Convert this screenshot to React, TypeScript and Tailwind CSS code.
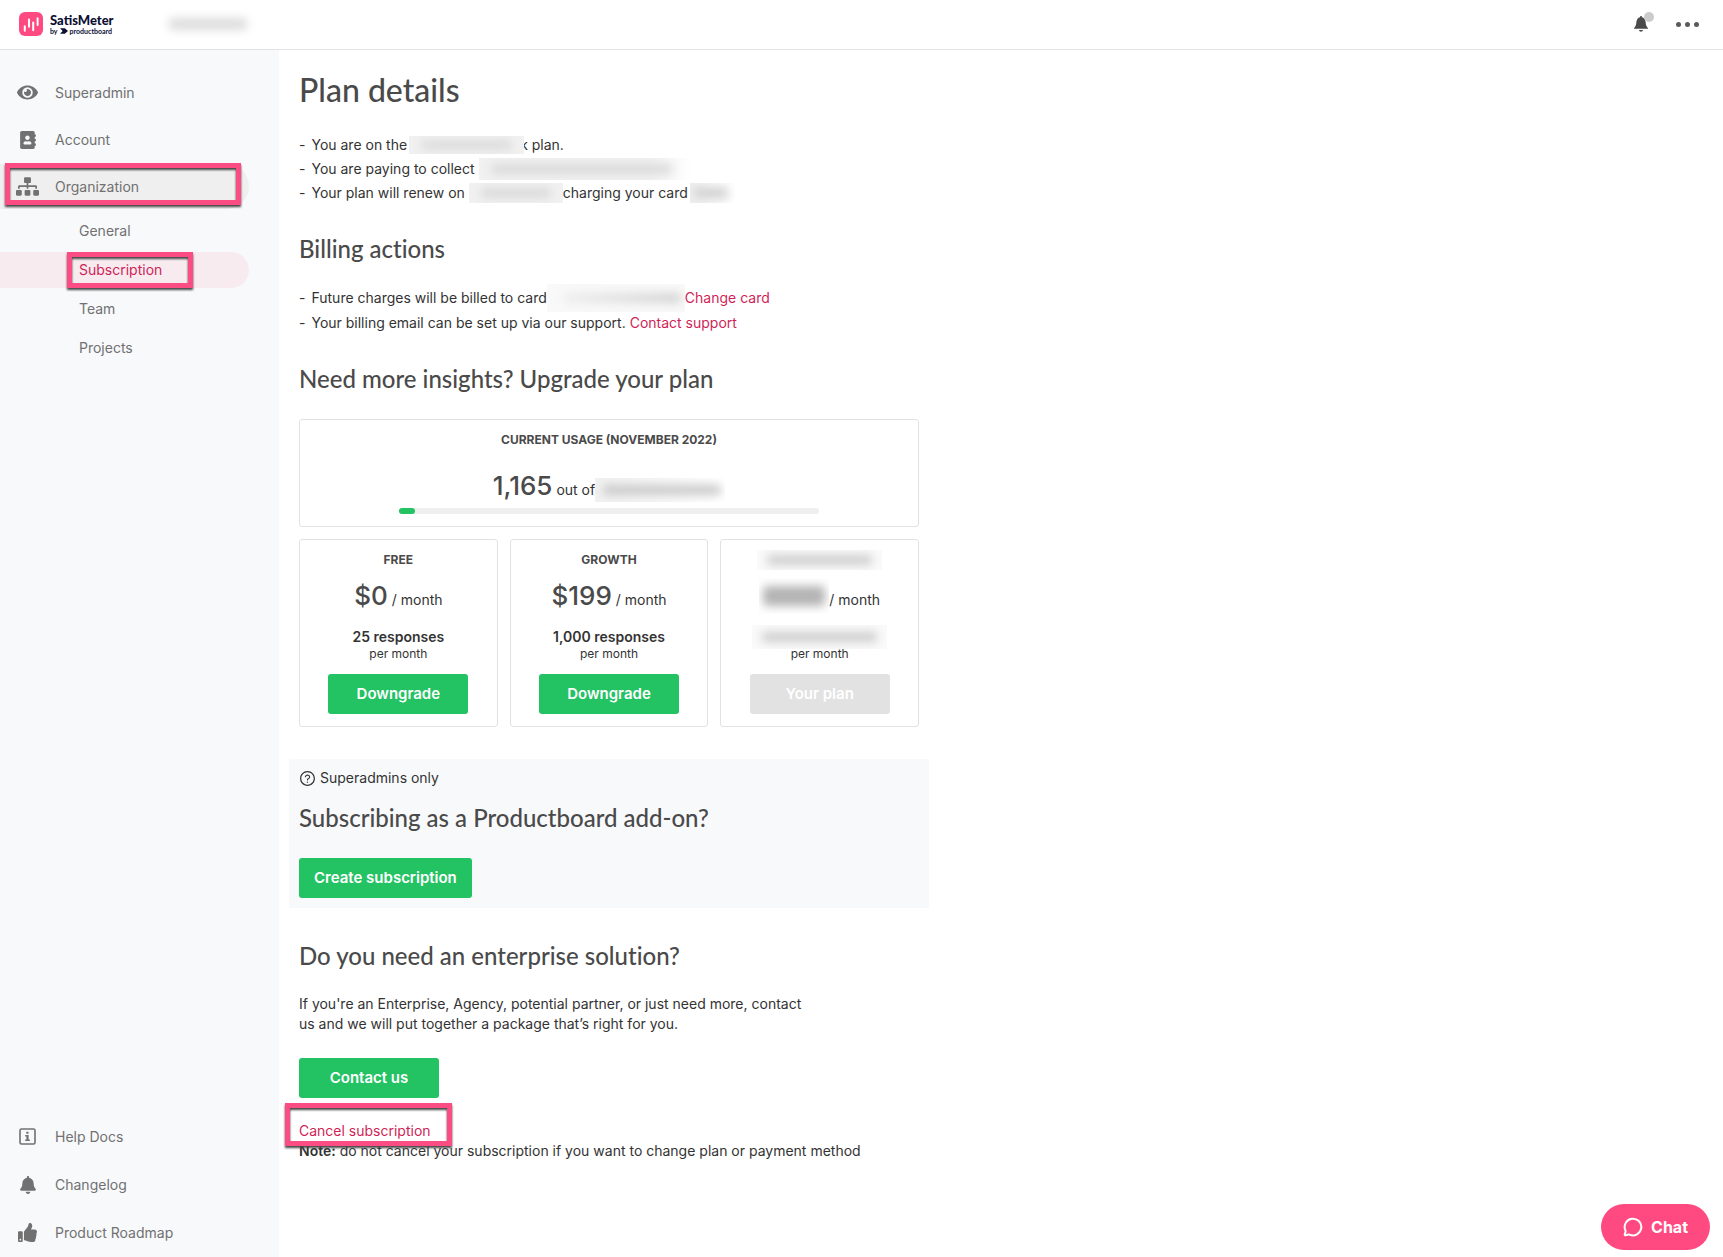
import type { ReactNode } from "react";
import clsx from "clsx";
import { MessageCircle } from "lucide-react";
import { FaAddressBook, FaBell, FaEye, FaSitemap, FaThumbsUp } from "react-icons/fa";
import { AiOutlineQuestionCircle } from "react-icons/ai";

function Logo() {
  return (
    <a href="#" className="flex w-[110px] items-center gap-[7px]" aria-label="SatisMeter">
      <svg className="shrink-0" width="24" height="24" viewBox="0 0 24 24">
        <rect width="24" height="24" rx="6" fill="#ff4a81" />
        <g stroke="#fff" strokeWidth="2" strokeLinecap="round">
          <path d="M5.800 14.200v4.600M10 7.400v7.400M14.200 10.400v7.800M18.600 6.200v6.800" />
        </g>
      </svg>
      <span className="flex flex-col text-[#0b1033]">
        <span className="font-[Lato] text-[13px] leading-[14px] font-black">SatisMeter</span>
        <span className="flex items-center gap-0.5 font-[Lato] text-[7px] leading-[8px] font-bold">
          by
          <svg width="8" height="6" viewBox="0 0 9 6">
            <path d="M0 0h5.400L9 3 5.400 6H0l3-3z" fill="#0b1033" />
          </svg>
          productboard
        </span>
      </span>
    </a>
  );
}

function InfoBox() {
  return (
    <svg width="17" height="17" viewBox="0 0 17 17">
      <rect x="1" y="1" width="15" height="15" rx="1.500" fill="none" stroke="currentColor" strokeWidth="1.600" />
      <path d="M7.300 3.800h2.200v2H7.300zM6.200 7h3.400v4.400h1.200v1.500H6.200v-1.500h1.200V8.500H6.200z" fill="currentColor" />
    </svg>
  );
}

function HeaderBell() {
  return (
    <svg width="14" height="16" viewBox="0 0 14 16">
      <path
        d="M7 0c.6 0 1 .4 1 .9v.3c2 .5 3.300 2.200 3.600 4.600.2 2.400.3 4.200 2.400 6.400v.6H0v-.6c2.100-2.200 2.200-4 2.400-6.400C2.700 3.400 4 1.700 6 1.200V.9C6 .4 6.400 0 7 0zM5 14h4c-.2 1-.9 1.700-2 1.700S5.200 15 5 14z"
        fill="#4a4a4a"
      />
    </svg>
  );
}

// Masked account data
function Redacted({ className, bar }: { className: string; bar?: string }) {
  return (
    <span className={clsx("inline-flex shrink-0 items-center justify-center overflow-hidden", className)}>
      <span className={clsx("w-full rounded-sm blur-[5px]", bar ?? "mx-2.5 h-2.5 bg-[#cdcdcd]")} />
    </span>
  );
}

function Highlight({ className }: { className: string }) {
  return (
    <span
      className={clsx(
        "pointer-events-none absolute z-10 border-[5px] border-[#fb4d84] drop-shadow-[0_2px_1px_#444]",
        className
      )}
    />
  );
}

type NavItemProps = { icon: ReactNode; label: string; active?: boolean; children?: ReactNode };

function NavItem({ icon, label, active, children }: NavItemProps) {
  return (
    <li className="relative">
      <a
        href="#"
        className={clsx("mr-[30px] flex h-[45px] items-center rounded-r-full", active && "bg-[#efefef]")}
      >
        <span className="flex w-[55px] justify-center">{icon}</span>
        {label}
      </a>
      {children}
    </li>
  );
}

function SubItem({ label, active, children }: { label: string; active?: boolean; children?: ReactNode }) {
  return (
    <li className="relative">
      <a
        href="#"
        className={clsx(
          "mr-[30px] flex h-9 items-center rounded-r-full pl-[79px]",
          active && "bg-[#f7ebf0] text-[#cf1f58]"
        )}
      >
        {label}
      </a>
      {children}
    </li>
  );
}

function Sidebar() {
  return (
    <nav className="flex w-[279px] shrink-0 flex-col justify-between bg-[#f8f9fb] pt-5 pb-0.5 text-[14px] text-[#717171]">
      <ul className="flex flex-col gap-0.5">
        <NavItem icon={<FaEye size={21} />} label="Superadmin" />
        <NavItem icon={<FaAddressBook size={18} />} label="Account" />
        <NavItem icon={<FaSitemap size={23} />} label="Organization" active>
          <Highlight className="-top-px left-[5px] h-[42px] w-[236px]" />
        </NavItem>
        <li>
          <ul className="mt-0.5 flex flex-col gap-[3px]">
            <SubItem label="General" />
            <SubItem label="Subscription" active>
              <Highlight className="top-0 left-[67px] h-9 w-[126px]" />
            </SubItem>
            <SubItem label="Team" />
            <SubItem label="Projects" />
          </ul>
        </li>
      </ul>
      <ul className="flex flex-col gap-[3px]">
        <NavItem icon={<InfoBox />} label="Help Docs" />
        <NavItem icon={<FaBell size={18} />} label="Changelog" />
        <NavItem icon={<FaThumbsUp size={19} />} label="Product Roadmap" />
      </ul>
    </nav>
  );
}

function Heading({ children }: { children: ReactNode }) {
  return (
    <h2 className="font-[Lato] text-[24px] leading-8 font-medium text-[#4a4a4a] [font-variant-ligatures:none]">
      {children}
    </h2>
  );
}

function Item({ children }: { children: ReactNode }) {
  return (
    <li className="flex h-6 items-center gap-1.5">
      <span>-</span>
      <div className="flex items-center">{children}</div>
    </li>
  );
}

function Button({ children, className, disabled }: { children: ReactNode; className?: string; disabled?: boolean }) {
  return (
    <button
      type="button"
      disabled={disabled}
      className={clsx(
        "h-10 min-w-[140px] rounded-[3px] px-[15px] text-[15px] font-semibold text-white",
        disabled ? "bg-[#e2e2e2]" : "bg-[#23c263]",
        className
      )}
    >
      {children}
    </button>
  );
}

type PlanProps = { name: ReactNode; price: ReactNode; responses: ReactNode; current?: boolean };

function Plan({ name, price, responses, current }: PlanProps) {
  return (
    <div className="flex flex-col items-center rounded-[3px] border border-[#e2e2e2] pt-3 pb-3">
      <h3 className="flex h-4 items-center text-[12px] font-bold text-[#4a4a4a]">{name}</h3>
      <p className="mt-2.5 flex h-9 items-center gap-1">
        <span className="flex text-[26px] leading-9 font-medium text-[#4a4a4a]">{price}</span>
        <span className="mt-2">/ month</span>
      </p>
      <p className="mt-[13px] flex h-5 items-center font-semibold">{responses}</p>
      <p className="text-[12px] leading-[14px]">per month</p>
      <Button disabled={current} className="mt-[13px]">
        {current ? "Your plan" : "Downgrade"}
      </Button>
    </div>
  );
}

export default function App() {
  return (
    <div className="flex min-h-screen flex-col bg-white font-[Inter,sans-serif] text-[14px] leading-5 text-[#333]">
      <header className="flex h-[50px] items-center border-b border-[#e2e2e2] pr-6 pb-px pl-[19px]">
        <Logo />
        <Redacted className="ml-6 h-9 w-[110px]" bar="mx-4 h-3 bg-[#dcdcdc]" />
        <div className="ml-auto flex items-center gap-7">
          <button type="button" aria-label="Notifications" className="relative">
            <HeaderBell />
            <span className="absolute -top-1 -right-1.5 size-2.5 rounded-full bg-[#cbcbcb]" />
          </button>
          <button type="button" aria-label="More" className="flex gap-1">
            <span className="size-[5px] rounded-full bg-[#5a5a5a]" />
            <span className="size-[5px] rounded-full bg-[#5a5a5a]" />
            <span className="size-[5px] rounded-full bg-[#5a5a5a]" />
          </button>
        </div>
      </header>
      <div className="flex grow">
        <Sidebar />
        <main className="max-w-[660px] grow px-5 pt-5">
          <h1 className="font-[Lato] text-[32px] leading-10 font-medium text-[#4a4a4a]">Plan details</h1>
          <ul className="mt-[23px]">
            <Item>
              You are on the
              <Redacted className="z-10 -mr-1 ml-0.5 h-[18px] w-[115px] bg-[#f1f1f1]" bar="mx-3 h-2.5 bg-[#dcdcdc]" />
              k plan.
            </Item>
            <Item>
              You are paying to collect
              <Redacted
                className="ml-1 h-[22px] w-[213px] bg-linear-to-r from-[#f1f1f1] from-80% to-white"
                bar="mr-5 ml-3 h-2.5 bg-[#dadada]"
              />
            </Item>
            <Item>
              Your plan will renew on
              <Redacted className="ml-1 h-[20px] w-[94px] bg-[#f1f1f1]" bar="mx-3 h-2.5 bg-[#dadada]" />
              charging your card
              <Redacted
                className="ml-0.5 h-[20px] w-[46px] bg-linear-to-r from-[#eee] to-white"
                bar="mr-2 ml-1 h-2.5 bg-[#cfcfcf]"
              />
            </Item>
          </ul>
          <div className="mt-7">
            <Heading>Billing actions</Heading>
          </div>
          <ul className="mt-[21px] flex flex-col gap-px">
            <Item>
              Future charges will be billed to card
              <Redacted
                className="h-7 w-[138px] bg-[#f9f9f9]"
                bar="mr-1 ml-4 h-2.5 bg-linear-to-r from-[#eee] to-[#d2d2d2]"
              />
              <a href="#" className="text-[#cf1f58]">Change card</a>
            </Item>
            <Item>
              Your billing email can be set up via our support.
              <a href="#" className="ml-1 text-[#cf1f58]">Contact support</a>
            </Item>
          </ul>
          <div className="mt-7">
            <Heading>Need more insights? Upgrade your plan</Heading>
          </div>
          <section className="mt-6 flex flex-col items-center rounded-[3px] border border-[#e2e2e2] px-[99px] pt-3 pb-3">
            <h3 className="text-[12px] leading-4 font-bold text-[#4a4a4a]">CURRENT USAGE (NOVEMBER 2022)</h3>
            <p className="mt-5 flex h-9 items-center">
              <span className="text-[26px] font-medium text-[#4a4a4a]">1,165</span>
              <span className="mt-2 ml-1">out of</span>
              <Redacted
                className="mt-2 h-6 w-[130px] bg-linear-to-r from-[#f1f1f1] to-white"
                bar="mr-1 ml-2 h-2.5 bg-[#c9c9c9]"
              />
            </p>
            <div className="mt-1 h-1.5 w-full rounded-full bg-[#efefef]">
              <div className="h-1.5 w-4 rounded-full bg-[#23c263]" />
            </div>
          </section>
          <section className="mt-3 grid grid-cols-3 gap-3">
            <Plan name="FREE" price="$0" responses="25 responses" />
            <Plan name="GROWTH" price="$199" responses="1,000 responses" />
            <Plan
              name={<Redacted className="h-5 w-[125px] bg-[#fafafa]" />}
              price={<Redacted className="-mr-1 h-9 w-[70px]" bar="mx-1 h-5 bg-[#b4b4b4]" />}
              responses={<Redacted className="h-6 w-[135px] bg-[#fafafa]" />}
              current
            />
          </section>
          <section className="-mx-2.5 mt-8 bg-[#f8f9fb] px-2.5 pt-[9px] pb-2.5">
            <p className="flex items-center gap-1">
              <AiOutlineQuestionCircle size={17} />
              Superadmins only
            </p>
            <div className="mt-3.5">
              <Heading>Subscribing as a Productboard add-on?</Heading>
            </div>
            <Button className="mt-6">Create subscription</Button>
          </section>
          <div className="mt-8">
            <Heading>Do you need an enterprise solution?</Heading>
          </div>
          <p className="mt-[22px] max-w-[520px]">
            If you're an Enterprise, Agency, potential partner, or just need more, contact us and we will put together a
            package that’s right for you.
          </p>
          <Button className="mt-6">Contact us</Button>
          <p className="relative mt-[23px]">
            <a href="#" className="text-[#cf1f58]">Cancel subscription</a>
            <Highlight className="-top-[18px] -left-3.5 h-[43px] w-[167px]" />
          </p>
          <p>
            <b className="font-semibold">Note:</b> do not cancel your subscription if you want to change plan or payment
            method
          </p>
        </main>
      </div>
      <button
        type="button"
        className="fixed right-[13px] bottom-[7px] flex h-[46px] items-center gap-2 rounded-full bg-[#ff4a81] px-[22px] text-[16px] font-bold text-white"
      >
        <MessageCircle size={20} strokeWidth={2.4} />
        Chat
      </button>
    </div>
  );
}
